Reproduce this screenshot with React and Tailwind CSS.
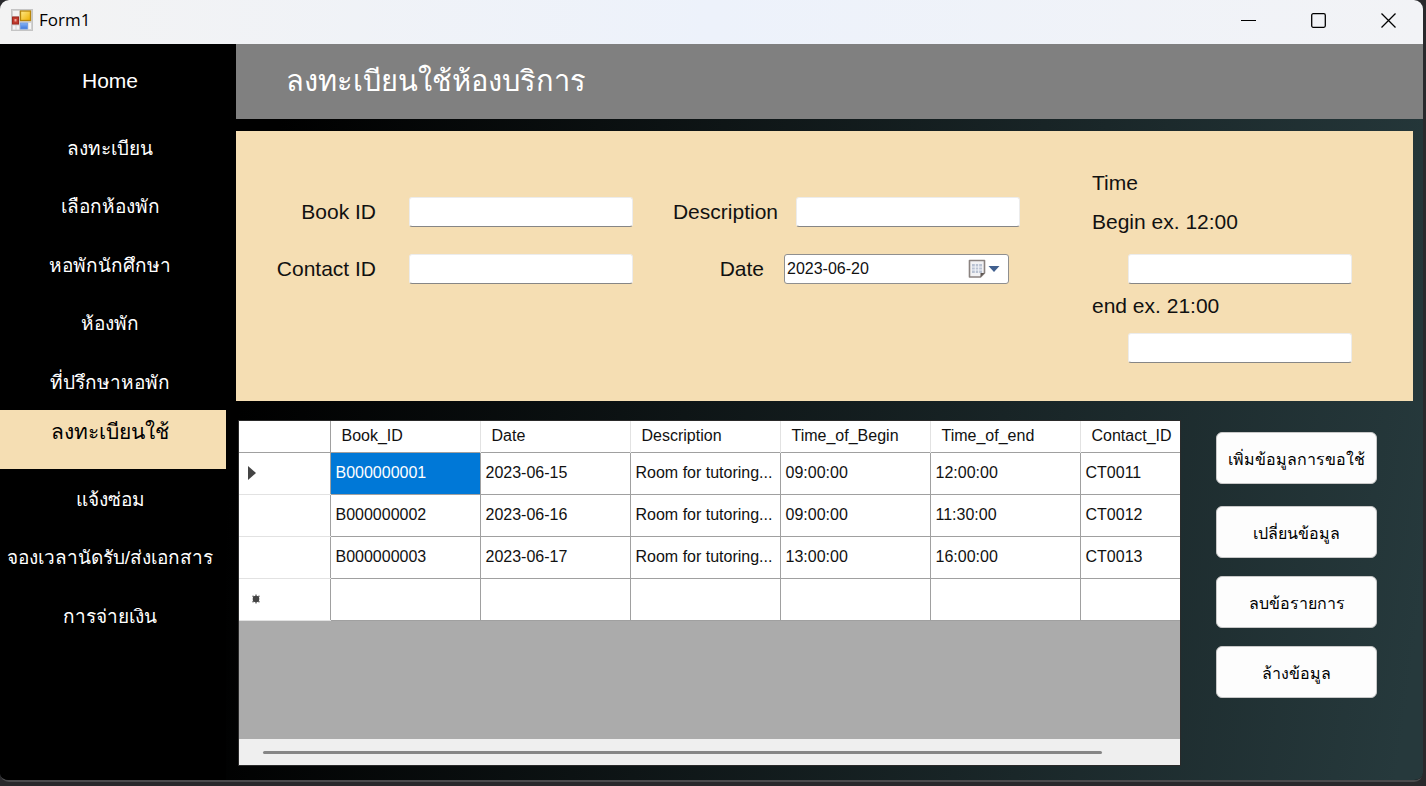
import React from "react";

const navItems = [
  { label: "ลงทะเบียน" },
  { label: "เลือกห้องพัก" },
  { label: "หอพักนักศึกษา" },
  { label: "ห้องพัก" },
  { label: "ที่ปรึกษาหอพัก" },
  { label: "ลงทะเบียนใช้", active: true },
  { label: "แจ้งซ่อม" },
  { label: "จองเวลานัดรับ/ส่งเอกสาร" },
  { label: "การจ่ายเงิน" },
];

const columns = ["Book_ID", "Date", "Description", "Time_of_Begin", "Time_of_end", "Contact_ID"];

const rows = [
  ["B000000001", "2023-06-15", "Room for tutoring...", "09:00:00", "12:00:00", "CT0011"],
  ["B000000002", "2023-06-16", "Room for tutoring...", "09:00:00", "11:30:00", "CT0012"],
  ["B000000003", "2023-06-17", "Room for tutoring...", "13:00:00", "16:00:00", "CT0013"],
  ["", "", "", "", "", ""],
];

function AppIcon() {
  return (
    <svg width="22" height="22" viewBox="0 0 22 22" aria-hidden="true">
      <defs>
        <linearGradient id="gold" x1="0" y1="0" x2="1" y2="1">
          <stop offset="0" stopColor="#ffe98a" />
          <stop offset="1" stopColor="#eeb000" />
        </linearGradient>
        <linearGradient id="blue" x1="0" y1="0" x2="0" y2="1">
          <stop offset="0" stopColor="#88b4f4" />
          <stop offset="1" stopColor="#3f78dc" />
        </linearGradient>
      </defs>
      <rect x="0.5" y="0.5" width="21" height="21" fill="#d2d2d2" stroke="#c4c4c4" />
      <rect x="2" y="2" width="6" height="5" fill="#f3f3f3" />
      <rect x="2" y="16.500" width="2.500" height="4" fill="#f5f5f5" />
      <rect x="5.500" y="16.500" width="2.500" height="4" fill="#f5f5f5" />
      <rect x="17.500" y="14" width="2.500" height="6" fill="#f5f5f5" />
      <rect x="1.500" y="8" width="6" height="7" fill="#c0392b" stroke="#a02a20" />
      <rect x="3.500" y="10" width="2" height="2.500" fill="#f0a59b" />
      <rect x="9.500" y="2" width="10" height="9.500" fill="url(#gold)" stroke="#b8860b" strokeWidth="1.300" />
      <rect x="9.500" y="14" width="7" height="6" fill="url(#blue)" stroke="#6f9be4" strokeWidth="0.800" />
    </svg>
  );
}

function CalendarIcon() {
  return (
    <svg width="32" height="20" viewBox="0 0 32 20" aria-hidden="true">
      <path d="M1.500 1.500h15v12.500l-4 4h-11z" fill="#f2f2f4" stroke="#8a8380" strokeWidth="1.600" strokeLinejoin="round" />
      <path d="M4 5h10v9h-10z" fill="#b9c2d2" />
      <path d="M4 8h10M4 11h10M7.300 5v9M10.700 5v9" stroke="#f2f4f8" strokeWidth="1" />
      <path d="M12.500 18v-4h4z" fill="#5f5753" />
      <path d="M20.500 7h11l-5.500 6z" fill="#41608f" />
    </svg>
  );
}

function Field({ id, label }) {
  return (
    <div className="flex items-center">
      <label htmlFor={id} className="mr-[33px] w-[100px] shrink-0 text-right">{label}</label>
      <TextBox id={id} />
    </div>
  );
}

function TextBox({ id, className = "" }) {
  return (
    <input
      id={id}
      type="text"
      className={`h-[30px] w-56 rounded-[3px] border border-[#ececec] border-b-[#868686] bg-white px-1 text-base outline-none ${className}`}
    />
  );
}

function Sidebar() {
  return (
    <aside className="w-[226px] shrink-0 bg-black text-white">
      <button type="button" className="h-[74px] w-full pr-1.5 text-[21px]">Home</button>
      <nav className="grid h-[526px] auto-rows-fr">
        {navItems.map((item) => (
          <button
            key={item.label}
            type="button"
            className={
              item.active
                ? "flex justify-center bg-[#f5deb3] pt-1 pr-1.5 text-[21px] leading-9 text-black whitespace-nowrap"
                : "flex items-center justify-center pt-1 pr-1.5 text-[19px] whitespace-nowrap"
            }
          >
            {item.label}
          </button>
        ))}
      </nav>
    </aside>
  );
}

function BookingForm() {
  return (
    <form className="mr-2.5 mt-3 flex h-[270px] bg-[#f5deb3] text-[21px] leading-6 text-[#111]">
      <div className="ml-10 flex flex-col gap-[27px] pt-[66px]">
        <Field id="book" label="Book ID" />
        <Field id="contact" label="Contact ID" />
      </div>
      <div className="ml-[37px] flex flex-col gap-[27px] pt-[66px]">
        <div className="flex items-center">
          <label htmlFor="description" className="mr-[18px] w-[108px] shrink-0 text-right">Description</label>
          <TextBox id="description" />
        </div>
        <div className="flex items-center">
          <label htmlFor="date" className="mr-5 w-[94px] shrink-0 text-right">Date</label>
          <div className="flex h-[30px] w-[225px] items-center rounded-[3px] border border-[#8f8f8f] bg-white pr-2">
            <input id="date" type="text" defaultValue="2023-06-20" className="w-0 flex-1 pl-0.5 text-base outline-none" />
            <button type="button" aria-label="Open calendar"><CalendarIcon /></button>
          </div>
        </div>
      </div>
      <div className="ml-[72px] flex flex-col items-start pt-10">
        <div>Time</div>
        <label htmlFor="begin" className="mt-[15px]">Begin ex. 12:00</label>
        <TextBox id="begin" className="mt-5 ml-9" />
        <label htmlFor="end" className="mt-2.5">end ex. 21:00</label>
        <TextBox id="end" className="mt-[15px] ml-9" />
      </div>
    </form>
  );
}

function BookingTable() {
  return (
    <div className="flex h-[346px] min-w-0 flex-1 flex-col border border-[#2a2a2a] bg-[#ababab]">
      <div className="flex-1 overflow-hidden">
        <table className="w-[991px] table-fixed border-collapse bg-white text-base text-[#111]">
          <colgroup>
            <col className="w-[91px]" />
            {columns.map((c) => <col key={c} className="w-[150px]" />)}
          </colgroup>
          <thead>
            <tr className="h-[31px] border-b border-[#a0a0a0]">
              <th aria-label="Row" className="border-r border-[#a0a0a0]" />
              {columns.map((c) => (
                <th key={c} className="border-r border-[#e2e2e2] py-0 pl-[11px] text-left font-normal">{c}</th>
              ))}
            </tr>
          </thead>
          <tbody>
            {rows.map((row, r) => (
              <tr key={r} className="h-[42px]">
                <th className="border-r border-b border-r-[#a0a0a0] border-b-[#e2e2e2] p-0 pl-2 text-left">
                  {r === 0 && (
                    <svg width="10" height="14" viewBox="0 0 10 14" aria-label="Current row"><path d="M1 0l8 7-8 7z" fill="#444" /></svg>
                  )}
                  {r === 3 && (
                    <svg className="ml-1" width="10" height="10" viewBox="0 0 10 10" aria-label="New row">
                      <path d="M5 0.500v9M1.500 1.800l7 6.400M1.500 8.200l7-6.400" stroke="#777" strokeWidth="1.500" />
                      <circle cx="5" cy="5" r="3.300" fill="#444" />
                    </svg>
                  )}
                </th>
                {row.map((cell, c) => (
                  <td
                    key={c}
                    className={
                      r === 0 && c === 0
                        ? "overflow-hidden border border-[#a0a0a0] bg-[#0078d7] p-0 pl-[5px] whitespace-nowrap text-white"
                        : "overflow-hidden border border-[#a0a0a0] p-0 pl-[5px] whitespace-nowrap"
                    }
                  >
                    {cell}
                  </td>
                ))}
              </tr>
            ))}
          </tbody>
        </table>
      </div>
      <div className="flex h-[26px] items-center bg-[#efefef] pr-[78px] pl-6">
        <div className="h-[3px] flex-1 rounded-full bg-[#868686]" />
      </div>
    </div>
  );
}

function ActionButton({ children, className = "" }) {
  return (
    <button
      type="button"
      className={`h-[52px] w-full rounded-[6px] border border-[#c8c8c8] bg-[#fdfdfd] pt-1 text-base whitespace-nowrap text-black ${className}`}
    >
      {children}
    </button>
  );
}

export default function App() {
  return (
    <div className="flex min-h-screen flex-col bg-[#29292c] pr-[3px] pb-1 font-['Liberation_Sans',sans-serif]">
      <div className="flex flex-1 flex-col overflow-hidden rounded-[9px] border-b-2 border-[#4b4b4d] bg-black">
        <header className="flex h-11 items-center bg-linear-to-r from-[#f3f3f3] via-[#edf2fb] to-[#f2f3f6] pb-1 pl-[11px]">
          <AppIcon />
          <h1 className="ml-[6px] flex-1 font-['Open_Sans',sans-serif] text-[17px] text-black">Form1</h1>
          <button type="button" aria-label="Minimize" className="flex h-10 w-[70px] items-center justify-center">
            <svg width="15" height="15" viewBox="0 0 15 15"><path d="M0 7.500h15" stroke="#000" /></svg>
          </button>
          <button type="button" aria-label="Maximize" className="flex h-10 w-[70px] items-center justify-center">
            <svg width="15" height="15" viewBox="0 0 15 15"><rect x="0.700" y="0.700" width="13.600" height="13.600" rx="1.500" fill="none" stroke="#000" strokeWidth="1.300" /></svg>
          </button>
          <button type="button" aria-label="Close" className="flex h-10 w-[70px] items-center justify-center">
            <svg width="15" height="15" viewBox="0 0 15 15"><path d="M0.500 0.500l14 14M14.500 0.500l-14 14" stroke="#000" strokeWidth="1.300" /></svg>
          </button>
        </header>
        <div className="flex flex-1">
          <Sidebar />
          <main className="min-w-0 flex-1 bg-[linear-gradient(98deg,#000_5%,#26393c_98%)] pl-2.5">
            <h2 className="flex h-[75px] items-center bg-[#808080] pl-[50px] text-[29px] text-white">ลงทะเบียนใช้ห้องบริการ</h2>
            <BookingForm />
            <div className="mt-[19px] mr-[46px] ml-0.5 flex items-start gap-[35px] pb-3.5">
              <BookingTable />
              <div className="flex w-[161px] shrink-0 flex-col gap-[18px] pt-3">
                <ActionButton className="mb-1">เพิ่มข้อมูลการขอใช้</ActionButton>
                <ActionButton>เปลี่ยนข้อมูล</ActionButton>
                <ActionButton>ลบข้อรายการ</ActionButton>
                <ActionButton>ล้างข้อมูล</ActionButton>
              </div>
            </div>
          </main>
        </div>
      </div>
    </div>
  );
}
